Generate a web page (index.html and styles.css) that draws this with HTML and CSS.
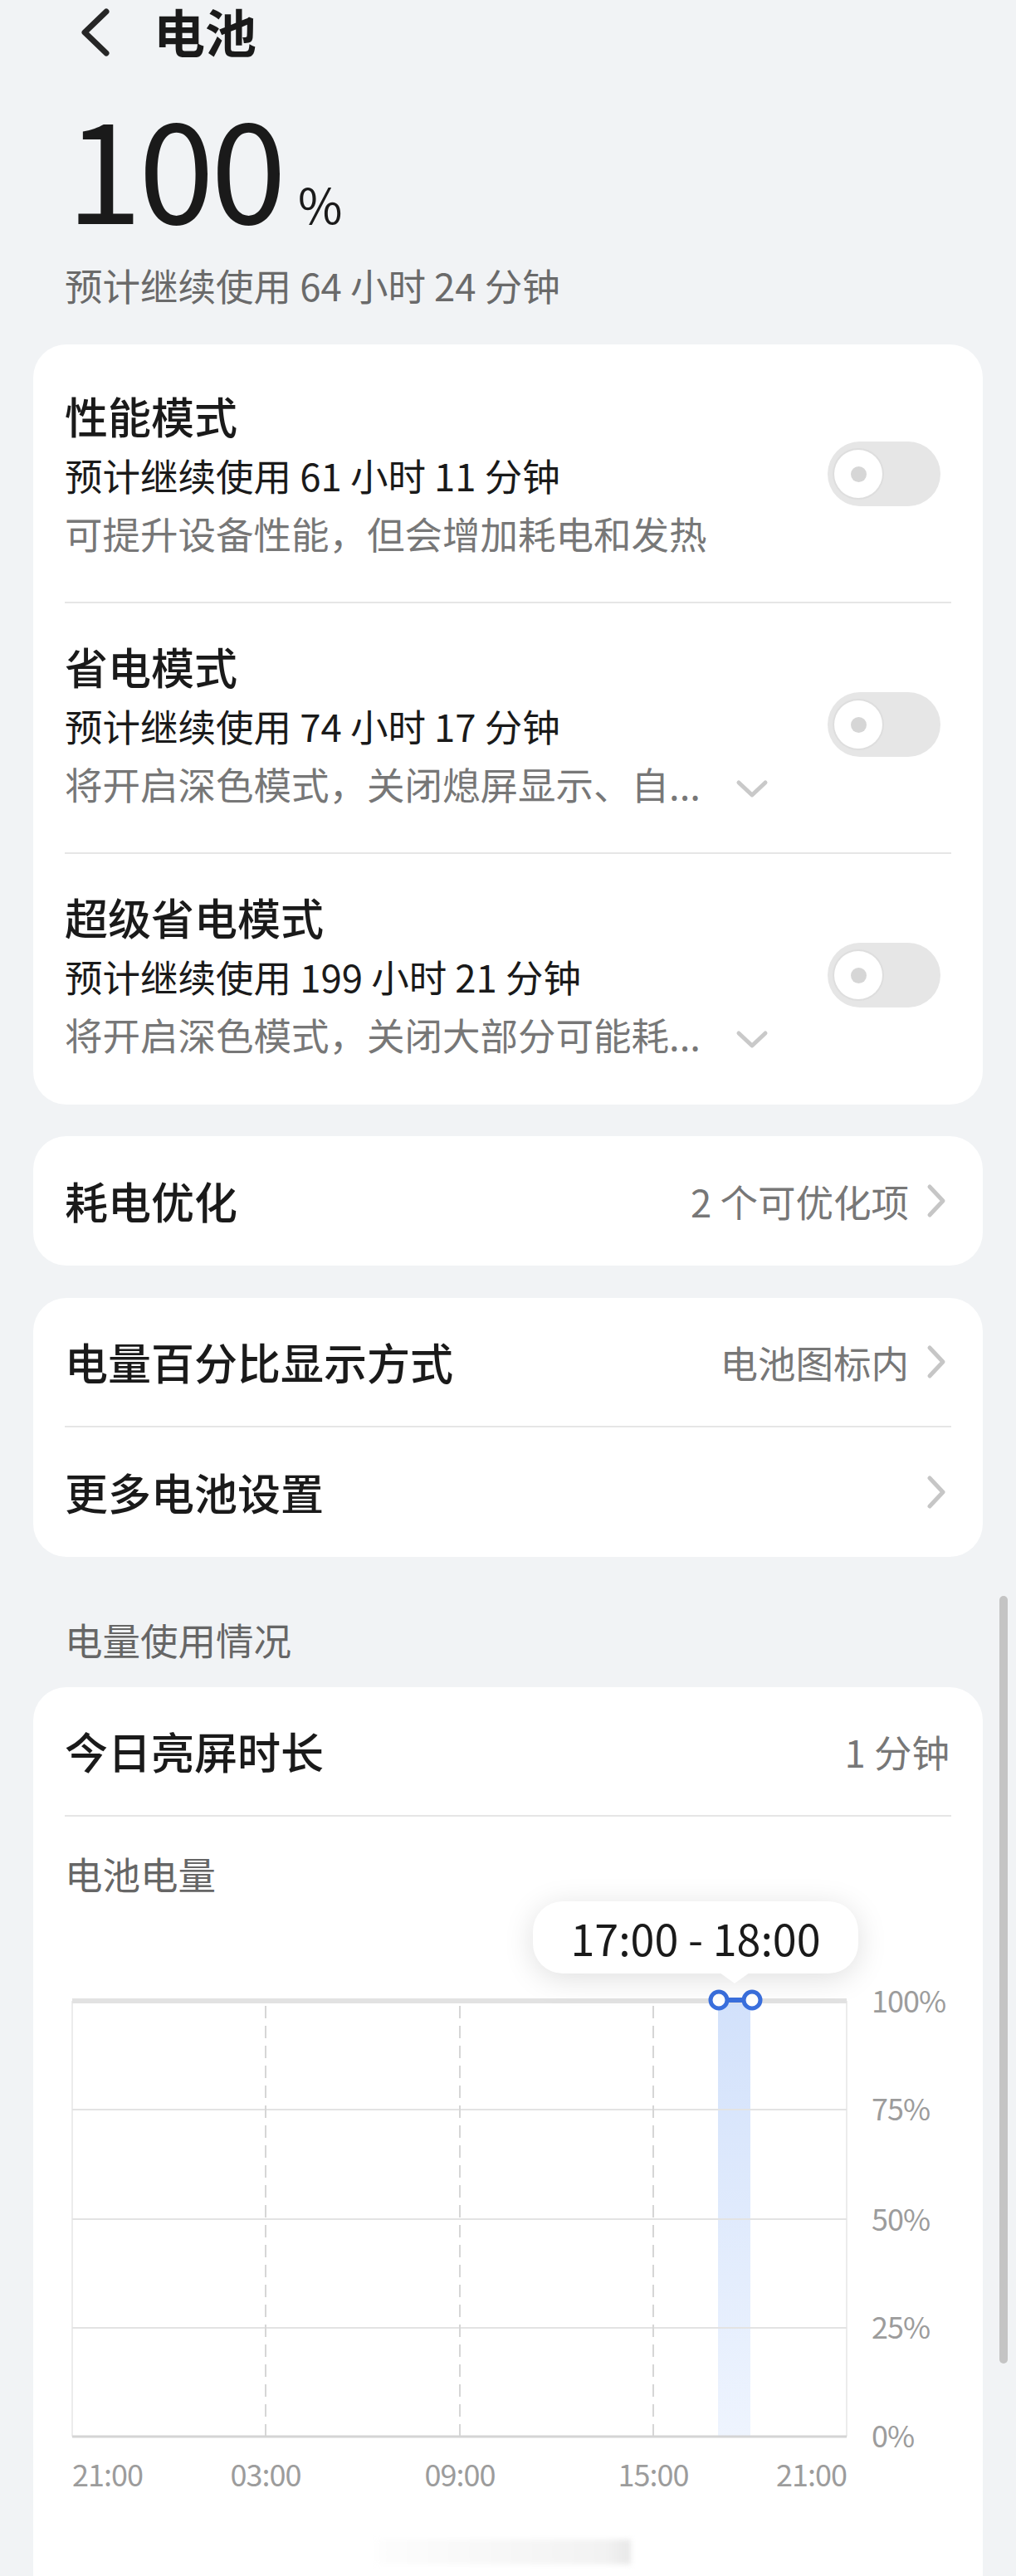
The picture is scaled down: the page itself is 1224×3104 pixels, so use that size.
FILE: index.html
```html
<!DOCTYPE html>
<html lang="zh-CN">
<head>
<meta charset="utf-8">
<title>电池</title>
<link rel="stylesheet" href="styles.css">
</head>
<body>
<div class="page">
  <header class="topbar">
    <svg class="back" width="36" height="60" viewBox="0 0 36 60"><polyline points="31,5 5,30 31,55" fill="none" stroke="#262626" stroke-width="7" stroke-linecap="round" stroke-linejoin="round"/></svg>
    <h1 class="page-title">电池</h1>
  </header>

  <section class="summary">
    <div class="level"><span class="num">100</span><span class="pct">%</span></div>
    <p class="estimate">预计继续使用 64 小时 24 分钟</p>
  </section>

  <div class="card modes">
    <div class="mode-row">
      <div class="mode-text">
        <div class="row-title">性能模式</div>
        <div class="mode-time">预计继续使用 61 小时 11 分钟</div>
        <div class="mode-desc">可提升设备性能，但会增加耗电和发热</div>
      </div>
      <div class="toggle"><span class="knob"></span></div>
    </div>
    <div class="mode-row">
      <div class="mode-text">
        <div class="row-title">省电模式</div>
        <div class="mode-time">预计继续使用 74 小时 17 分钟</div>
        <div class="mode-desc"><span class="desc-text">将开启深色模式，关闭熄屏显示、自...</span><svg class="expand" width="40" height="24" viewBox="0 0 40 24"><polyline points="4,4 20,19 36,4" fill="none" stroke="#c9c9c9" stroke-width="5" stroke-linecap="round" stroke-linejoin="round"/></svg></div>
      </div>
      <div class="toggle"><span class="knob"></span></div>
    </div>
    <div class="mode-row">
      <div class="mode-text">
        <div class="row-title">超级省电模式</div>
        <div class="mode-time">预计继续使用 199 小时 21 分钟</div>
        <div class="mode-desc"><span class="desc-text">将开启深色模式，关闭大部分可能耗...</span><svg class="expand" width="40" height="24" viewBox="0 0 40 24"><polyline points="4,4 20,19 36,4" fill="none" stroke="#c9c9c9" stroke-width="5" stroke-linecap="round" stroke-linejoin="round"/></svg></div>
      </div>
      <div class="toggle"><span class="knob"></span></div>
    </div>
  </div>

  <div class="card">
    <div class="link-row">
      <span class="row-title">耗电优化</span>
      <span class="row-value">2 个可优化项</span>
      <svg class="arrow" width="26" height="42" viewBox="0 0 26 42"><polyline points="5,4 21,21 5,38" fill="none" stroke="#c6c6c6" stroke-width="5" stroke-linecap="round" stroke-linejoin="round"/></svg>
    </div>
  </div>

  <div class="card">
    <div class="link-row divided">
      <span class="row-title">电量百分比显示方式</span>
      <span class="row-value">电池图标内</span>
      <svg class="arrow" width="26" height="42" viewBox="0 0 26 42"><polyline points="5,4 21,21 5,38" fill="none" stroke="#c6c6c6" stroke-width="5" stroke-linecap="round" stroke-linejoin="round"/></svg>
    </div>
    <div class="link-row">
      <span class="row-title">更多电池设置</span>
      <span class="row-value"></span>
      <svg class="arrow" width="26" height="42" viewBox="0 0 26 42"><polyline points="5,4 21,21 5,38" fill="none" stroke="#c6c6c6" stroke-width="5" stroke-linecap="round" stroke-linejoin="round"/></svg>
    </div>
  </div>

  <h2 class="section-title">电量使用情况</h2>

  <div class="card usage">
    <div class="link-row divided">
      <span class="row-title">今日亮屏时长</span>
      <span class="row-value plain">1 分钟</span>
    </div>
    <div class="chart-title">电池电量</div>
    <div class="chart">
      <div class="tip">17:00 - 18:00</div>
      <svg class="plot" width="1068" height="640" viewBox="0 0 1068 640">
        <defs>
          <linearGradient id="barFill" x1="0" y1="0" x2="0" y2="1">
            <stop offset="0" stop-color="#d2e1fb"/>
            <stop offset="1" stop-color="#eef4fe"/>
          </linearGradient>
        </defs>
        <rect x="787" y="40" width="39" height="525" fill="url(#barFill)"/>
        <line x1="9" y1="40" x2="9" y2="565" stroke="#ececec" stroke-width="2"/>
        <line x1="942" y1="40" x2="942" y2="565" stroke="#ececec" stroke-width="2"/>
        <line x1="9" y1="171" x2="942" y2="171" stroke="#e3e3e3" stroke-width="2"/>
        <line x1="9" y1="303" x2="942" y2="303" stroke="#e3e3e3" stroke-width="2"/>
        <line x1="9" y1="434" x2="942" y2="434" stroke="#e3e3e3" stroke-width="2"/>
        <line x1="242" y1="46" x2="242" y2="565" stroke="#d6d6d6" stroke-width="2" stroke-dasharray="15 9"/>
        <line x1="476" y1="46" x2="476" y2="565" stroke="#d6d6d6" stroke-width="2" stroke-dasharray="15 9"/>
        <line x1="709" y1="46" x2="709" y2="565" stroke="#d6d6d6" stroke-width="2" stroke-dasharray="15 9"/>
        <line x1="9" y1="40" x2="942" y2="40" stroke="#e2e2e2" stroke-width="6"/>
        <line x1="9" y1="565" x2="942" y2="565" stroke="#d4d4d4" stroke-width="3"/>
        <line x1="788" y1="39" x2="828" y2="39" stroke="#3a6fdd" stroke-width="6"/>
        <circle cx="788" cy="39" r="10" fill="#ffffff" stroke="#3a6fdd" stroke-width="5"/>
        <circle cx="828" cy="39" r="10" fill="#ffffff" stroke="#3a6fdd" stroke-width="5"/>
        <g class="ylab">
          <text x="972" y="54">100%</text>
          <text x="972" y="184">75%</text>
          <text x="972" y="317">50%</text>
          <text x="972" y="447">25%</text>
          <text x="972" y="578">0%</text>
        </g>
        <g class="xlab">
          <text x="9" y="625" text-anchor="start">21:00</text>
          <text x="242" y="625" text-anchor="middle">03:00</text>
          <text x="476" y="625" text-anchor="middle">09:00</text>
          <text x="709" y="625" text-anchor="middle">15:00</text>
          <text x="942" y="625" text-anchor="end">21:00</text>
        </g>
      </svg>
    </div>
    <div class="smudge"></div>
  </div>

  <div class="scrollbar"></div>
</div>
</body>
</html>
```

FILE: styles.css
```css
html, body {
  margin: 0;
  padding: 0;
}
body {
  background: #f1f3f5;
  font-family: "Noto Sans CJK SC", "Noto Sans", sans-serif;
  color: #1a1a1a;
}
.page {
  position: relative;
  width: 1224px;
  min-height: 3104px;
  overflow: hidden;
}
.topbar {
  display: flex;
  align-items: center;
  height: 78px;
  padding-left: 97px;
}
.back {
  display: block;
}
.page-title {
  margin: -4px 0 0 52px;
  font-size: 62px;
  font-weight: 700;
  line-height: 78px;
}
.summary {
  padding: 0 78px;
}
.level {
  display: flex;
  align-items: baseline;
  margin-top: 1px;
  height: 240px;
  line-height: 1;
}
.num {
  font-size: 164px;
  font-weight: 400;
  line-height: 240px;
  letter-spacing: -4px;
  margin-left: 2px;
}
.pct {
  font-size: 58px;
  font-weight: 400;
  line-height: 60px;
  margin-left: 18px;
}
.estimate {
  margin: -6px 0 0;
  font-size: 45.5px;
  line-height: 60px;
  color: #6a6a6a;
}
.card {
  margin: 0 40px;
  background: #fff;
  border-radius: 40px;
  padding: 0 38px;
}
.modes {
  margin-top: 42px;
  padding-top: 10px;
  padding-bottom: 2px;
}
.mode-row {
  display: flex;
  align-items: center;
  padding: 40px 0 48px;
  border-bottom: 2px solid #e6e6e6;
}
.mode-row:last-child {
  border-bottom: none;
}
.mode-text {
  flex: 1;
}
.row-title {
  font-size: 52px;
  font-weight: 500;
  line-height: 72px;
  color: #1a1a1a;
}
.mode-time {
  font-size: 45.5px;
  line-height: 70px;
  color: #1a1a1a;
}
.mode-desc {
  display: flex;
  align-items: center;
  font-size: 45.5px;
  line-height: 70px;
  color: #777;
}
.expand {
  display: block;
  margin-left: 42px;
  margin-top: 14px;
}
.toggle {
  position: relative;
  width: 136px;
  height: 78px;
  border-radius: 39px;
  background: #e6e6e6;
  margin-right: 13px;
  flex: none;
}
.knob {
  position: absolute;
  left: 8px;
  top: 10px;
  width: 58px;
  height: 58px;
  border-radius: 50%;
  background: #fff;
  box-shadow: 0 0 0 2px #dedede;
}
.knob::after {
  content: "";
  position: absolute;
  left: 20px;
  top: 20px;
  width: 19px;
  height: 19px;
  border-radius: 50%;
  background: #d6d6d6;
}
.card + .card {
  margin-top: 39px;
}
.modes + .card {
  margin-top: 38px;
}
.link-row {
  display: flex;
  align-items: center;
  height: 156px;
  box-sizing: border-box;
}
.link-row.divided {
  border-bottom: 2px solid #e6e6e6;
}
.link-row .row-title {
  flex: 1;
}
.row-value {
  font-size: 45.5px;
  line-height: 60px;
  color: #777;
}
.arrow {
  display: block;
  margin-left: 20px;
  margin-right: 5px;
}
.row-value.plain {
  margin-right: 2px;
}
.section-title {
  margin: 69px 78px 28px;
  font-size: 45.5px;
  font-weight: 400;
  line-height: 60px;
  color: #666;
}
.usage {
  padding-bottom: 60px;
}
.chart-title {
  margin-top: 38px;
  font-size: 45.5px;
  line-height: 60px;
  color: #666;
}
.chart {
  position: relative;
  padding-top: 84px;
}
.plot {
  display: block;
}
.ylab text, .xlab text {
  font-family: "Noto Sans CJK SC", sans-serif;
  font-size: 36px;
  letter-spacing: -1px;
  fill: #9c9c9c;
}
.tip {
  position: absolute;
  left: 564px;
  top: 4px;
  width: 392px;
  height: 87px;
  box-sizing: border-box;
  border-radius: 36px;
  background: #fff;
  box-shadow: 0 6px 36px rgba(0, 0, 0, 0.13);
  font-size: 52px;
  line-height: 87px;
  text-align: center;
  color: #1a1a1a;
  z-index: 2;
}
.tip::after {
  content: "";
  position: absolute;
  left: 225px;
  bottom: -12px;
  width: 0;
  height: 0;
  border-left: 18px solid transparent;
  border-right: 18px solid transparent;
  border-top: 13px solid #fff;
}
.smudge {
  margin: 49px 0 0 375px;
  width: 307px;
  height: 30px;
  background: linear-gradient(90deg, #fdfdfd, #f2f2f2 90%, #e8e8e8);
  filter: blur(3px);
}
.scrollbar {
  position: absolute;
  left: 1204px;
  top: 1923px;
  width: 10px;
  height: 925px;
  border-radius: 5px;
  background: #c4c4c4;
}
```
